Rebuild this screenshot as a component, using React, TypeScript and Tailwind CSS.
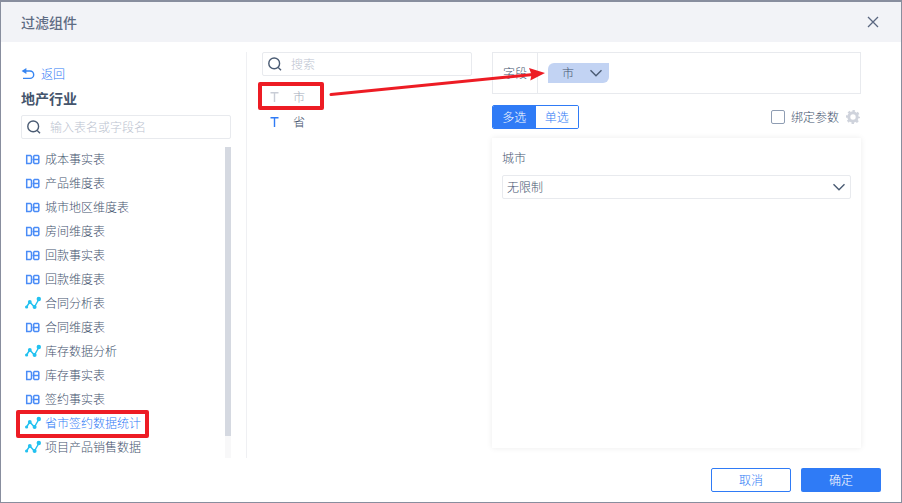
import { useState } from 'react'

type TableItem = {
  name: string
  kind: 'db' | 'chart'
  marked?: boolean
}

const TABLES: TableItem[] = [
  { name: '成本事实表', kind: 'db' },
  { name: '产品维度表', kind: 'db' },
  { name: '城市地区维度表', kind: 'db' },
  { name: '房间维度表', kind: 'db' },
  { name: '回款事实表', kind: 'db' },
  { name: '回款维度表', kind: 'db' },
  { name: '合同分析表', kind: 'chart' },
  { name: '合同维度表', kind: 'db' },
  { name: '库存数据分析', kind: 'chart' },
  { name: '库存事实表', kind: 'db' },
  { name: '签约事实表', kind: 'db' },
  { name: '省市签约数据统计', kind: 'chart', marked: true },
  { name: '项目产品销售数据', kind: 'chart' },
]

function SearchIcon() {
  return (
    <svg className="h-4 w-4 shrink-0" viewBox="0 0 16 16" fill="none" stroke="#4a5b73" strokeWidth="1.4" aria-hidden="true">
      <circle cx="7.2" cy="7.4" r="5.4" />
      <path d="M11.2 11.4 14 14.2" />
    </svg>
  )
}

function BackIcon() {
  return (
    <svg className="h-3.5 w-3.5" viewBox="0 0 14 14" fill="none" aria-hidden="true">
      <path d="M3 4h6a3.700 3.700 0 0 1 0 7.400H2" stroke="#3685f2" strokeWidth="1.4" />
      <path d="M.6 4 5.400 1v6z" fill="#3685f2" />
    </svg>
  )
}

function DbIcon() {
  return (
    <svg className="h-4 w-4" viewBox="0 0 16 16" fill="none" stroke="#4a8cf7" strokeWidth="1.5" aria-hidden="true">
      <path d="M1.700 4.500h3.800l1 1v6l-1 1H1.700z" />
      <path d="M9.500 4.500h3.500l.8.8v6.400l-.8.8H9.500l-.8-.8V5.300zM7.500 8.500h6.500" />
    </svg>
  )
}

function ChartIcon() {
  return (
    <svg className="h-4 w-4" viewBox="0 0 16 16" fill="#22c1f0" aria-hidden="true">
      <path d="M1.5 12 4.800 7l4.600 5L14 4" fill="none" stroke="#22c1f0" strokeWidth="1.4" />
      <circle cx="1.6" cy="12" r="1.6" />
      <circle cx="4.8" cy="7" r="1.9" />
      <circle cx="9.6" cy="12" r="2" />
      <circle cx="13.8" cy="4" r="2.2" />
    </svg>
  )
}

function ChevronIcon() {
  return (
    <svg className="h-3 w-3" viewBox="0 0 12 12" fill="none" stroke="#4a5b73" strokeWidth="1.4" aria-hidden="true">
      <path d="M.5 3.2 6 8.800l5.500-5.600" />
    </svg>
  )
}

function GearIcon() {
  return (
    <svg className="h-3.5 w-3.5" viewBox="0 0 14 14" fill="none" stroke="#cfd3dc" aria-hidden="true">
      <circle cx="7" cy="7" r="4.2" strokeWidth="3" />
      <circle cx="7" cy="7" r="6" strokeWidth="2" strokeDasharray="2.400 2.312" strokeDashoffset="1.200" />
    </svg>
  )
}

function TextTypeIcon() {
  return (
    <svg className="mr-3.5 h-3 w-[9px]" viewBox="0 0 9 12" fill="none" stroke="currentColor" strokeWidth="1.4" aria-hidden="true">
      <path d="M.5 1.700h8M4.500 1.700v9.300" />
    </svg>
  )
}

function SearchBox({ label }: { label: string }) {
  return (
    <label className="flex h-6 shrink-0 items-center gap-2 rounded-xs border border-[#e8eaee] pl-1">
      <SearchIcon />
      <input
        type="text"
        aria-label={label}
        placeholder={label}
        className="w-full min-w-0 text-xs outline-none placeholder:text-[#bcc3d0]"
      />
    </label>
  )
}

function TablePane() {
  return (
    <section className="flex w-[226px] shrink-0 flex-col border-r border-[#eff0f3] pr-[15px]">
      <button type="button" className="mt-2.5 flex h-6 items-center gap-1.5 text-xs text-[#2f7bf6]">
        <BackIcon />
        返回
      </button>
      <h2 className="text-sm leading-6 font-bold text-[#44546c]">地产行业</h2>
      <div className="mt-[5px]">
        <SearchBox label="输入表名或字段名" />
      </div>
      <div className="mt-2 flex min-h-0 flex-1 justify-between">
        <ul>
          {TABLES.map((table) => (
            <li key={table.name} className="relative h-6">
              <button
                type="button"
                className={`flex h-6 items-center gap-1 pl-1 text-xs whitespace-nowrap ${table.marked ? 'text-[#2f7bf6]' : ''}`}
              >
                {table.kind === 'db' ? <DbIcon /> : <ChartIcon />}
                {table.name}
              </button>
              {table.marked ? (
                <span className="pointer-events-none absolute -top-px -left-[5px] h-7 w-[133px] rounded-xs border-4 border-[#ed1c24]" />
              ) : null}
            </li>
          ))}
        </ul>
        <div className="w-1.5 bg-[#f8f8f9]">
          <div className="h-[93%] bg-[#d5d9e1]" />
        </div>
      </div>
    </section>
  )
}

function FieldPane() {
  return (
    <section className="ml-[15px] w-[210px] shrink-0">
      <SearchBox label="搜索" />
      <ul className="mt-2 text-xs">
        <li className="relative">
          <button type="button" disabled className="flex h-[25px] items-center pl-2 text-[#a3abba]">
            <span className="text-[#c9cdd6]">
              <TextTypeIcon />
            </span>
            市
          </button>
          <span className="pointer-events-none absolute -top-0.5 -left-1 h-7 w-[66px] rounded-xs border-4 border-[#ed1c24]" />
          {/* drag hint from the field to its drop target */}
          <svg
            className="pointer-events-none absolute -top-5 left-[66px] h-8 w-[220px]"
            viewBox="0 0 220 32"
            aria-hidden="true"
          >
            <path d="M3 30.500 205 10.500" stroke="#ed1c24" strokeWidth="3" strokeLinecap="round" />
            <path d="M217 9 201 4l2.500 6.500-1.200 6z" fill="#ed1c24" />
          </svg>
        </li>
        <li>
          <button type="button" className="flex h-[25px] items-center pl-2">
            <span className="text-[#2f7bf6]">
              <TextTypeIcon />
            </span>
            省
          </button>
        </li>
      </ul>
    </section>
  )
}

function SettingsPane() {
  const [multiple, setMultiple] = useState(true)
  const active = 'bg-[#2f7bf6] text-white'
  const idle = 'bg-white text-[#2f7bf6]'

  return (
    <section className="ml-5 flex min-w-0 flex-1 flex-col text-xs">
      <div className="flex h-[42px] shrink-0 border border-[#e8eaee]">
        <div className="flex w-[45px] items-center justify-end border-r border-[#e8eaee] pr-2.5">字段</div>
        <div className="flex items-center pl-2.5">
          <button
            type="button"
            className="flex h-5 w-[61px] items-center justify-between rounded-tl-md rounded-br-md bg-[#c2d3f3] pr-[7px] pl-3.5"
          >
            市
            <ChevronIcon />
          </button>
        </div>
      </div>

      <div className="mt-[11px] flex h-6 shrink-0 items-center justify-between">
        <div className="flex h-6 w-[87px] overflow-hidden rounded-xs border border-[#2f7bf6]">
          <button
            type="button"
            aria-pressed={multiple}
            onClick={() => setMultiple(true)}
            className={`flex-1 ${multiple ? active : idle}`}
          >
            多选
          </button>
          <button
            type="button"
            aria-pressed={!multiple}
            onClick={() => setMultiple(false)}
            className={`flex-1 ${multiple ? idle : active}`}
          >
            单选
          </button>
        </div>
        <div className="flex items-center gap-[7px] pr-px">
          <label className="flex items-center gap-1.5">
            <input
              type="checkbox"
              className="h-3.5 w-3.5 appearance-none rounded-xs border border-[#8f9db3] bg-white checked:bg-[#2f7bf6]"
            />
            绑定参数
          </label>
          <button type="button" aria-label="参数设置">
            <GearIcon />
          </button>
        </div>
      </div>

      <div className="mt-[9px] mb-2.5 flex-1 px-2.5 pt-2.5 shadow-[0_0_6px_rgba(0,0,0,0.08)]">
        <label htmlFor="city" className="block leading-5">
          城市
        </label>
        <div className="relative mt-[7px]">
          <select
            id="city"
            className="block h-6 w-full appearance-none rounded-xs border border-[#e8eaee] bg-white pl-1 text-xs"
          >
            <option>无限制</option>
          </select>
          <span className="pointer-events-none absolute inset-y-0 right-1.5 flex items-center">
            <ChevronIcon />
          </span>
        </div>
      </div>
    </section>
  )
}

export default function App() {
  return (
    <div
      role="dialog"
      aria-labelledby="dialog-title"
      className="flex h-screen flex-col border border-t-2 border-[#888e9e] bg-white font-['Noto_Sans_CJK_SC',sans-serif] font-light text-[#44536e]"
    >
      <header className="flex h-10 shrink-0 items-center justify-between bg-[#f2f3f7] pr-[22px] pl-5">
        <h1 id="dialog-title" className="text-sm font-medium text-[#5f6c84]">
          过滤组件
        </h1>
        <button type="button" aria-label="关闭">
          <svg className="h-3 w-3" viewBox="0 0 12 12" stroke="#5a6780" strokeWidth="1.300" aria-hidden="true">
            <path d="m1 1 10 10M11 1 1 11" />
          </svg>
        </button>
      </header>
      <main className="flex min-h-0 flex-1 pt-2.5 pr-10 pl-5">
        <TablePane />
        <FieldPane />
        <SettingsPane />
      </main>
      <footer className="flex shrink-0 justify-end gap-2.5 py-2.5 pr-5 text-xs">
        <button type="button" className="h-6 w-20 rounded-xs border border-[#2f7bf6] text-[#2f7bf6]">
          取消
        </button>
        <button type="button" className="h-6 w-20 rounded-xs bg-[#2f7bf6] text-white">
          确定
        </button>
      </footer>
    </div>
  )
}
